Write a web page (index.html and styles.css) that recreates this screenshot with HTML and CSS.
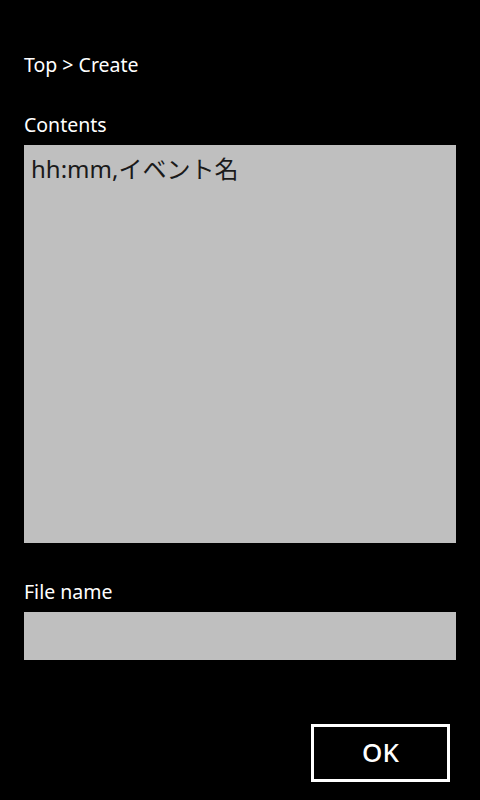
FILE: index.html
```html
<!DOCTYPE html>
<html lang="ja">
<head>
<meta charset="utf-8">
<title>Create</title>
<link rel="stylesheet" href="styles.css">
</head>
<body>
<div class="page">
  <div class="breadcrumb">Top &gt; Create</div>
  <div class="label label-contents">Contents</div>
  <div class="textarea">hh:mm,イベント名</div>
  <div class="label label-file">File name</div>
  <div class="input"></div>
  <div class="actions">
    <div class="btn">OK</div>
  </div>
</div>
</body>
</html>
```
FILE: styles.css
```css
html, body {
  margin: 0;
  padding: 0;
  background: #000;
}
body {
  width: 480px;
  height: 800px;
  overflow: hidden;
  color: #fff;
  font-family: "Noto Sans", "Noto Sans CJK JP", sans-serif;
}
.page {
  display: flex;
  flex-direction: column;
  padding: 0 24px;
}
.breadcrumb {
  font-size: 19.5px;
  line-height: 28px;
  margin-top: 51px;
}
.label {
  font-size: 19.5px;
  line-height: 28px;
}
.label-contents {
  margin-top: 32px;
}
.textarea {
  margin-top: 6px;
  height: 398px;
  box-sizing: border-box;
  background: #bfbfbf;
  color: #1a1a1a;
  font-size: 24px;
  line-height: 30px;
  padding: 9px 7px;
}
.label-file {
  margin-top: 35px;
}
.input {
  margin-top: 6px;
  height: 48px;
  background: #bfbfbf;
}
.actions {
  display: flex;
  justify-content: flex-end;
  margin-top: 64px;
  padding-right: 6px;
}
.btn {
  width: 139px;
  height: 58px;
  box-sizing: border-box;
  border: 3px solid #fff;
  display: flex;
  align-items: center;
  justify-content: center;
  font-size: 26px;
  font-weight: 500;
  padding-bottom: 2px;
}
```
